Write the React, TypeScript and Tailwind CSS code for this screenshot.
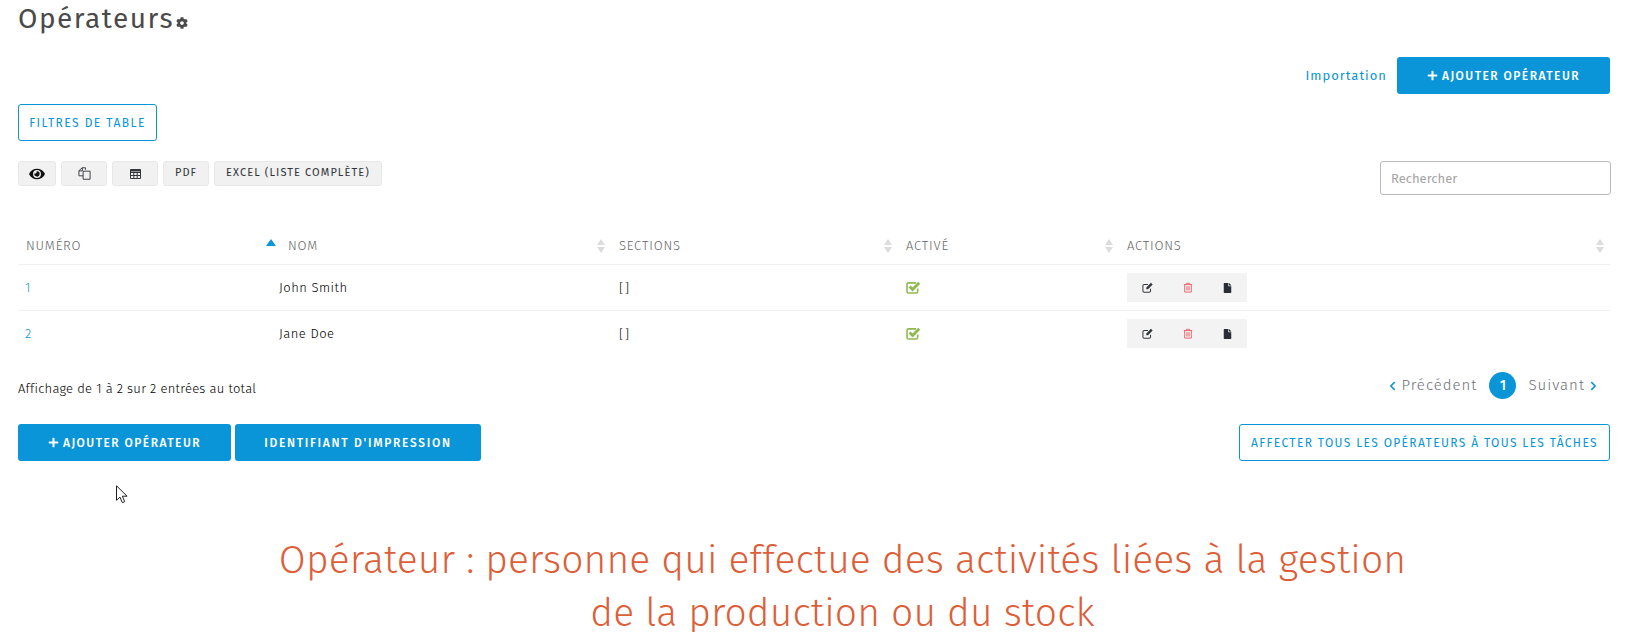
import React from 'react';
import { FaCog, FaEye, FaPlus, FaFile, FaChevronLeft, FaChevronRight } from 'react-icons/fa';

const font = "font-['Fira_Sans','Noto_Sans',Roboto,sans-serif]";

// FA4 style outline icons, the packages only carry the newer drawings
const CheckIcon: React.FC = () => (
  <svg viewBox="0 0 16 14" className="h-[13px] w-[15px]" fill="none">
    <path d="M12.5 8v3.2c0 1-.8 1.8-1.8 1.8H2.800C1.800 13 1 12.200 1 11.200V3.800C1 2.800 1.800 2 2.800 2h8" stroke="#8dba4e" strokeWidth="1.700" />
    <path d="M3.800 6l3.200 3.200 7.200-7.200" stroke="#8dba4e" strokeWidth="3" />
  </svg>
);

const EditIcon: React.FC = () => (
  <svg viewBox="0 0 14 13" className="h-[11px] w-[12px]" fill="none">
    <path d="M10 8v2.500c0 .9-.7 1.500-1.500 1.500h-6C1.700 12 1 11.400 1 10.500v-6C1 3.700 1.700 3 2.500 3H7" stroke="#33363d" strokeWidth="1.200" />
    <path d="M5 6.500L10.500 1l2 2L7 8.500H5z" fill="#33363d" />
  </svg>
);

const TrashIcon: React.FC = () => (
  <svg viewBox="0 0 12 13" className="h-[11px] w-[10px]" fill="none" stroke="#e8606a">
    <path d="M1 3h10M4 3V1.500h4V3M2 3v9h8V3" strokeWidth="1.100" />
    <path d="M4.500 5v5M6 5v5M7.500 5v5" strokeWidth="0.900" />
  </svg>
);

const CopyIcon: React.FC = () => (
  <svg viewBox="0 0 14 14" className="h-[13px] w-[13px]" fill="none" stroke="#33363d" strokeWidth="1">
    <path d="M8 3V.8H4.500L1 4v5.500h4.500" />
    <path d="M5.500 4.500h7.500v8.700H5.500z" />
    <path d="M1 4.200h3.700V1" />
  </svg>
);

const TableIcon: React.FC = () => (
  <svg viewBox="0 0 11 10" className="h-[10px] w-[11px]" fill="none" stroke="#33363d" strokeWidth="1">
    <path d="M.5.500h10v9H.5z" />
    <path d="M.5 3.500h10M.5 6.500h10M3.800 3.500v6M7.200 3.500v6" />
    <path d="M.5 1.500h10" strokeWidth="2" />
  </svg>
);

const SortIcon: React.FC<{ active?: boolean }> = ({ active }) =>
  active ? (
    <span className="mb-[6px] h-0 w-0 border-x-[5px] border-b-[7px] border-x-transparent border-b-[#0a96d8]" />
  ) : (
    <span className="flex flex-col gap-[2px]">
      <span className="h-0 w-0 border-x-[4px] border-b-[6px] border-x-transparent border-b-[#dcdcdc]" />
      <span className="h-0 w-0 border-x-[4px] border-t-[6px] border-x-transparent border-t-[#dcdcdc]" />
    </span>
  );

const HeaderCell: React.FC<{ label: string; className: string; active?: boolean }> = ({ label, className, active }) => (
  <div className={`flex items-center justify-between ${className}`}>
    <span className="text-[13px] font-light tracking-[0.8px] text-[#666]">{label}</span>
    <SortIcon active={active} />
  </div>
);

const Row: React.FC<{ num: string; name: string; last?: boolean }> = ({ num, name, last }) => (
  <div className={`flex items-center text-[13px] font-light tracking-[0.5px] ${last ? 'h-[45px]' : 'h-[46px] border-b border-[#f1f1f1]'}`}>
    <div className="w-[261px] pl-[7px] text-[#0a96d8]">{num}</div>
    <div className="w-[340px] text-black">{name}</div>
    <div className="w-[287px] tracking-[2px] text-black">[]</div>
    <div className="w-[221px]"><CheckIcon /></div>
    <div className="flex h-[29px] w-[120px] items-center justify-around bg-[#f3f3f3]">
      <EditIcon />
      <TrashIcon />
      <FaFile className="h-[10px] w-[9px] text-[#2a2d36]" />
    </div>
  </div>
);

const ToolButton: React.FC<{ className: string; children: React.ReactNode }> = ({ className, children }) => (
  <button className={`flex h-[25px] items-center justify-center rounded-[3px] border border-[#e8e8e8] bg-[#f1f1f1] text-[11px] tracking-[1.1px] text-[#33363d] ${className}`}>
    {children}
  </button>
);

const PrimaryButton: React.FC<{ className: string; children: React.ReactNode }> = ({ className, children }) => (
  <button className={`flex h-[37px] items-center justify-center rounded-[3px] bg-[#0995d7] text-[12px] font-medium text-white ${className}`}>
    {children}
  </button>
);

const OutlineButton: React.FC<{ className: string; children: React.ReactNode }> = ({ className, children }) => (
  <button className={`flex h-[37px] items-center justify-center rounded-[3px] border border-[#0995d7] bg-white text-[12px] text-[#0995d7] ${className}`}>
    {children}
  </button>
);

export default function App() {
  return (
    <div className={`h-[632px] w-[1626px] overflow-hidden bg-white ${font}`}>
      <div className="pl-[18px] pr-[16px]">
        <h1 className="flex h-[57px] items-start pt-[1px] text-[28px] leading-[36px] font-normal tracking-[1.500px] text-[#4a4a4a]">
          Opérateurs
          <FaCog className="mt-[16px] ml-[2px] h-[12px] w-[12px] text-[#4a4a4a]" />
        </h1>

        <div className="flex items-center justify-end gap-[10px]">
          <span className="text-[13px] tracking-[1px] text-[#0995d7]">Importation</span>
          <PrimaryButton className="w-[213px] tracking-[1.450px]"><FaPlus className="mr-[4px] h-[11px] w-[11px]" />AJOUTER OPÉRATEUR</PrimaryButton>
        </div>

        <OutlineButton className="mt-[10px] w-[139px] tracking-[1.450px]">FILTRES DE TABLE</OutlineButton>

        <div className="mt-[20px] flex items-start justify-between">
          <div className="flex gap-[5px]">
            <ToolButton className="w-[38px]"><FaEye className="h-[14px] w-[16px] text-[#111]" /></ToolButton>
            <ToolButton className="w-[46px]"><CopyIcon /></ToolButton>
            <ToolButton className="w-[46px]"><TableIcon /></ToolButton>
            <ToolButton className="w-[46px]">PDF</ToolButton>
            <ToolButton className="w-[168px]">EXCEL (LISTE COMPLÈTE)</ToolButton>
          </div>
          <input
            placeholder="Rechercher"
            className="mr-[-1px] h-[34px] w-[231px] rounded-[3px] border border-[#b9b9c3] px-[10px] text-[13px] placeholder:text-[#a5a5a5]"
          />
        </div>

        <div className="mt-[32px]">
          <div className="flex h-[38px] items-center border-b border-[#f1f1f1]">
            <HeaderCell label="NUMÉRO" className="w-[258px] pl-[8px]" active />
            <HeaderCell label="NOM" className="ml-[12px] w-[317px]" />
            <HeaderCell label="SECTIONS" className="ml-[14px] w-[273px]" />
            <HeaderCell label="ACTIVÉ" className="ml-[14px] w-[207px]" />
            <HeaderCell label="ACTIONS" className="ml-[14px] w-[477px]" />
          </div>
          <Row num="1" name="John Smith" />
          <Row num="2" name="Jane Doe" last />
        </div>

        <div className="mt-[16px] flex items-start justify-between">
          <span className="pt-[7px] text-[13px] leading-[20px] font-light tracking-[0.25px] text-black">Affichage de 1 à 2 sur 2 entrées au total</span>
          <div className="mr-[13px] flex items-center text-[15px] font-light tracking-[1px] text-[#6e7178]">
            <FaChevronLeft className="mr-[5px] h-[10px] w-[7px] text-[#0995d7]" />
            <span>Précédent</span>
            <span className="mx-[12px] flex h-[27px] w-[27px] items-center justify-center rounded-full bg-[#0995d7] text-[14px] font-medium tracking-normal text-white">1</span>
            <span>Suivant</span>
            <FaChevronRight className="ml-[5px] h-[10px] w-[7px] text-[#0995d7]" />
          </div>
        </div>

        <div className="mt-[25px] flex justify-between">
          <div className="flex gap-[4px]">
            <PrimaryButton className="w-[213px] tracking-[1.450px]"><FaPlus className="mr-[4px] h-[11px] w-[11px]" />AJOUTER OPÉRATEUR</PrimaryButton>
            <PrimaryButton className="w-[246px] tracking-[1.700px]">IDENTIFIANT D'IMPRESSION</PrimaryButton>
          </div>
          <OutlineButton className="w-[371px] tracking-[1.350px]">AFFECTER TOUS LES OPÉRATEURS À TOUS LES TÂCHES</OutlineButton>
        </div>

        {/* cursor caught in the capture */}
        <svg viewBox="0 0 13 19" className="absolute top-[485px] left-[116px] h-[19px] w-[13px]" fill="#fff" stroke="#222" strokeWidth="1">
          <path d="M.5.800v14.500l3.500-3.200 2.300 5.600 2.400-1-2.300-5.500h4.700z" />
        </svg>

        <div className="mt-[81px] flex flex-col gap-[17px] pl-[57px] text-center text-[39px] leading-[36px] font-light tracking-[0.1px] text-[#dc5f3a]">
          <p>Opérateur : personne qui effectue des activités liées à la gestion</p>
          <p>de la production ou du stock</p>
        </div>
      </div>
    </div>
  );
}
